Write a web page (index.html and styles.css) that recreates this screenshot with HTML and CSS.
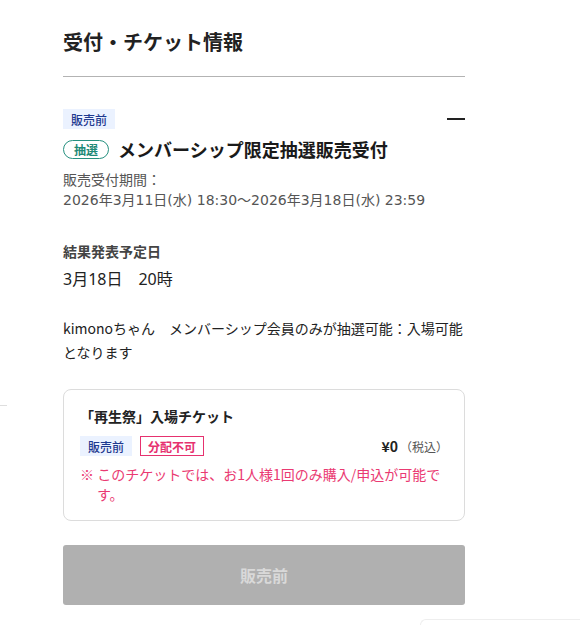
FILE: index.html
```html
<!DOCTYPE html>
<html lang="ja">
<head>
<meta charset="utf-8">
<title>受付・チケット情報</title>
<link rel="stylesheet" href="styles.css">
</head>
<body>
<div class="edge-line"></div>
<main class="page">
  <h1 class="page-title">受付・チケット情報</h1>
  <hr class="divider">

  <section class="reception">
    <div class="status-row">
      <span class="badge-status">販売前</span>
      <span class="collapse" aria-label="閉じる"></span>
    </div>
    <div class="name-row">
      <span class="badge-lottery">抽選</span>
      <h2 class="reception-name">メンバーシップ限定抽選販売受付</h2>
    </div>
    <p class="period">販売受付期間：<br>2026年3月11日(水) 18:30～2026年3月18日(水) 23:59</p>

    <h3 class="result-label">結果発表予定日</h3>
    <p class="result-date">3月18日　20時</p>

    <p class="note">kimonoちゃん　メンバーシップ会員のみが抽選可能：入場可能となります</p>

    <div class="ticket-card">
      <h4 class="ticket-name">「再生祭」入場チケット</h4>
      <div class="ticket-meta">
        <div class="ticket-badges">
          <span class="badge-status">販売前</span>
          <span class="badge-nodist">分配不可</span>
        </div>
        <div class="price"><strong>¥0</strong><span class="tax">（税込）</span></div>
      </div>
      <p class="ticket-notice">※ このチケットでは、お1人様1回のみ購入/申込が可能です。</p>
    </div>

    <button class="buy-button" disabled>販売前</button>
  </section>
</main>
<div class="corner-box"></div>
</body>
</html>
```
FILE: styles.css
```css
* { box-sizing: border-box; }
html, body { margin: 0; padding: 0; background: #fff; }
body {
  font-family: "Noto Sans CJK JP", "Noto Sans", sans-serif;
  color: #222;
  position: relative;
  height: 625px;
  overflow: hidden;
}
.page {
  width: 402px;
  margin-left: 63px;
  padding-top: 26px;
}
.page-title {
  margin: 0;
  font-size: 20px;
  line-height: 32px;
  font-weight: 700;
  color: #222;
}
.divider {
  margin: 18px 0 0;
  border: 0;
  border-top: 1px solid #b3b3b3;
  height: 0;
}
.reception { padding-top: 32px; }
.status-row {
  display: flex;
  justify-content: space-between;
  align-items: center;
  height: 20px;
}
.badge-status {
  display: inline-flex;
  align-items: center;
  height: 20px;
  padding: 0 8px;
  background: #ebf2ff;
  color: #1f3a8f;
  font-size: 12px;
  font-weight: 500;
}
.collapse {
  display: block;
  width: 18px;
  height: 2px;
  background: #222;
}
.name-row {
  display: flex;
  align-items: center;
  gap: 9px;
  margin-top: 8px;
  height: 24px;
}
.badge-lottery {
  display: inline-flex;
  align-items: center;
  height: 19px;
  padding: 0 10px;
  border: 1.5px solid #26907f;
  border-radius: 10px;
  color: #1f8a78;
  font-size: 12px;
  font-weight: 700;
}
.reception-name {
  margin: 0;
  font-size: 18px;
  line-height: 24px;
  font-weight: 700;
  color: #1a1a1a;
}
.period {
  margin: 9px 0 0;
  font-family: "DejaVu Sans", "Noto Sans CJK JP", sans-serif;
  font-size: 14px;
  line-height: 20px;
  color: #555;
}
.result-label {
  margin: 31px 0 0;
  font-size: 14px;
  line-height: 20px;
  font-weight: 700;
  color: #444;
}
.result-date {
  margin: 6px 0 0;
  font-family: "Noto Sans", "Noto Sans CJK JP", sans-serif;
  font-size: 16px;
  line-height: 24px;
  color: #222;
}
.note {
  margin: 25px 0 0;
  font-size: 14px;
  line-height: 24px;
  color: #222;
}
.ticket-card {
  margin-top: 25px;
  border: 1px solid #dcdcdc;
  border-radius: 8px;
  padding: 16px 16px 16px 16px;
}
.ticket-name {
  margin: 0;
  font-size: 14px;
  line-height: 20px;
  font-weight: 700;
  color: #222;
}
.ticket-meta {
  display: flex;
  justify-content: space-between;
  align-items: center;
  margin-top: 10px;
}
.ticket-badges { display: flex; gap: 8px; }
.badge-nodist {
  display: inline-flex;
  align-items: center;
  height: 20px;
  padding: 0 7px;
  border: 1px solid #e6316f;
  color: #e6316f;
  font-size: 12px;
  font-weight: 700;
}
.price {
  display: flex;
  align-items: baseline;
  font-size: 14px;
  color: #222;
}
.price strong { font-weight: 700; }
.tax { font-size: 12px; color: #555; margin-left: 2px; }
.ticket-notice {
  margin: 8px 0 0;
  padding-left: 17px;
  text-indent: -17px;
  font-size: 14px;
  line-height: 20px;
  color: #ea3a72;
}
.buy-button {
  display: block;
  width: 100%;
  height: 60px;
  margin-top: 24px;
  border: 0;
  border-radius: 3px;
  background: #b0b0b0;
  color: #d9d9d9;
  font-family: inherit;
  font-size: 16px;
  font-weight: 700;
}
.edge-line {
  position: absolute;
  left: 0;
  top: 405px;
  width: 7px;
  height: 1px;
  background: #dedede;
}
.corner-box {
  position: absolute;
  left: 420px;
  top: 619px;
  width: 160px;
  height: 6px;
  border-top: 1px solid #eeeeee;
  border-left: 1px solid #eeeeee;
  border-top-left-radius: 8px;
  background: #fff;
}
```
